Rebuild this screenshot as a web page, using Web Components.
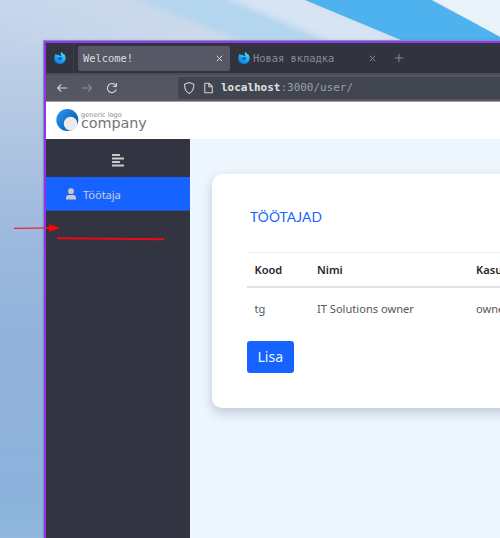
<!DOCTYPE html>
<html lang="et">
<head>
<meta charset="utf-8">
<title>Welcome!</title>
<style>
html,body{margin:0;height:100%;overflow:hidden}
body{font-family:"Noto Sans","Open Sans",sans-serif}
</style>
</head>
<body>
<desk-top>
  <browser-window>
    <tab-bar slot="tabs">
      <browser-tab active>Welcome!</browser-tab>
      <browser-tab>Новая вкладка</browser-tab>
    </tab-bar>
    <nav-bar slot="nav"><b slot="host">localhost</b>:3000/user/</nav-bar>
    <brand-header slot="page"></brand-header>
    <page-body slot="page">
      <side-bar slot="side"><side-item>Töötaja</side-item></side-bar>
      <content-card>
        <card-title>TÖÖTAJAD</card-title>
        <user-table></user-table>
        <action-button>Lisa</action-button>
      </content-card>
    </page-body>
  </browser-window>
  <red-marks slot="overlay"></red-marks>
</desk-top>
<script>
const define = (name, html) => customElements.define(name, class extends HTMLElement {
  constructor(){ super(); this.attachShadow({mode:'open'}).innerHTML = html; }
});

define('desk-top', `<style>
:host{display:block;position:relative;box-sizing:border-box;width:500px;height:538px;padding:41px 0 0 44px;overflow:hidden}
.wall{position:absolute;left:0;top:0}
.main{position:relative;height:100%}
</style>
<svg class="wall" width="500" height="538">
<defs>
<linearGradient id="a" x1="0" y1="0" x2="0" y2="1"><stop offset="0" stop-color="#c9d7ed"/><stop offset=".25" stop-color="#b0c6e2"/><stop offset=".42" stop-color="#9fb9df"/><stop offset=".62" stop-color="#91b3da"/><stop offset=".84" stop-color="#8fb2dc"/><stop offset=".93" stop-color="#8bb3db"/><stop offset="1" stop-color="#91b8dc"/></linearGradient>
<linearGradient id="b" x1="0" y1="0" x2="1" y2="0"><stop offset="0" stop-color="#cbd9ea" stop-opacity="0"/><stop offset=".35" stop-color="#cbdaea"/><stop offset="1" stop-color="#cddceb"/></linearGradient>
<filter id="s" x="-10%" y="-30%" width="120%" height="160%"><feGaussianBlur stdDeviation="3"/></filter>
<filter id="t"><feGaussianBlur stdDeviation=".6"/></filter>
</defs>
<rect width="500" height="538" fill="url(#a)"/>
<rect width="500" height="44" fill="url(#b)"/>
<path d="M125-5H225L355 50H265Z" fill="#b3d5ee" filter="url(#s)"/>
<path d="M220-5H300L420 50H350Z" fill="#d6e4f3" filter="url(#s)"/>
<path d="M293-5H422L510 42V50H425Z" fill="#4db2ed" filter="url(#t)"/>
<path d="M424-5H510V42Z" fill="#e9f1f9" filter="url(#t)"/>
</svg>
<div class="main"><slot></slot></div><slot name="overlay"></slot>`);

define('browser-window', `<style>
:host{display:flex;flex-direction:column;box-sizing:border-box;height:100%;border-left:2px solid #9530f0;border-top:2px solid #9736f4;box-shadow:0 0 0 1px #7d96b4,0 0 3px rgba(50,70,120,.3)}
</style><slot name="tabs"></slot><slot name="nav"></slot><slot name="page"></slot>`);

const fox = `<svg class="fox" width="12" height="12" viewBox="0 0 12 12"><defs><linearGradient id="f" x1=".8" y1="0" x2=".3" y2="1"><stop offset="0" stop-color="#60e7fa"/><stop offset=".45" stop-color="#20b3f5"/><stop offset="1" stop-color="#0878e8"/></linearGradient></defs><path d="M1.7 1.7 3.2 3 4.7 2.7 6.1 4 7.4 3.2 6.5 1.5 7.5.1C8 1.2 9 1.4 9.5 2.4L10 2c1.5 2 2.1 4.3 1.2 6.2C10.200 10.700 8.300 12 6 12 3 12 .3 10 .3 6.600.3 4.700.7 3.200 1.700 1.700Z" fill="url(#f)"/><path d="M4 5.300 5.500 4.800 6.200 5.200 7.200 4.800C8 5.600 7.900 7 6.800 7.600 5.400 8.200 4 7.300 4 5.300Z" fill="#143eab"/><path d="M3.700 4.800 5.700 4.500 6.400 5.200 5.100 6Z" fill="#45cdf7"/></svg>`;

define('tab-bar', `<style>
:host{display:flex;flex:none;height:30px;background:#31343f;align-items:center;box-sizing:border-box;color:#888a94}
.pin{width:27px;height:30px;border-right:1px solid #3e414d;display:flex;align-items:center;justify-content:center;margin-right:4px;flex:none}
.plus{margin-left:12px}
</style><span class="pin">${fox}</span><slot></slot>
<svg class="plus" width="10" height="10" viewBox="0 0 10 10"><path d="M5 .8V9.200M.8 5H9.200" stroke="#858892" stroke-width="1"/></svg>`);

define('browser-tab', `<style>
:host{display:flex;align-items:center;box-sizing:border-box;height:25px;width:152px;padding:0 7px 0 8px;border-radius:2px;font:10.400px/25px "DejaVu Sans Mono",monospace;color:#888b95;white-space:nowrap;flex:none}
:host([active]){background:#565865;color:#dcdde3;padding-left:5px}
:host([active]) .fox{display:none}
.fox{margin-right:3px;flex:none}
.x{margin-left:auto}
:host(:not([active])) .x{margin-right:-1px}
</style>${fox}<span><slot></slot></span><svg class="x" width="7" height="7" viewBox="0 0 7 7"><path d="M.8.8 6.200 6.200M6.200.8.8 6.200" stroke="currentColor" stroke-width="1"/></svg>`);

define('nav-bar', `<style>
:host{display:flex;flex:none;height:29px;box-sizing:border-box;background:#545662;border-top:2px solid #4b4c59;border-bottom:1px solid #a0a1a9;align-items:center;padding-left:10px}
.ico{display:block;flex:none}
.url{display:flex;align-items:center;flex:1;height:22px;margin-left:60px;background:#414550;border-radius:2px 0 0 2px;padding-left:5px;font:10.970px/22px "DejaVu Sans Mono",monospace;color:#9c9fa8;white-space:pre}
::slotted(b){color:#e0e1e6}
</style>
<svg class="ico" width="62" height="14" viewBox="0 0 62 14" fill="none" stroke="#d5d6dc" stroke-width="1.150"><path d="M11.300 7H1.800M5.200 3.400 1.600 7 5.200 10.600"/><path d="M26 7H35.600M32 3.400 35.600 7 32 10.600" stroke="#898b95"/><path d="M59.800 4.800A4.500 4.500 0 1 0 60.200 8.400M60.400 2V5.500H56.900"/></svg>
<div class="url"><svg width="38" height="14" viewBox="0 0 38 14" fill="none" stroke="#cdced5" stroke-width="1.100" stroke-linejoin="round"><path d="M6.200 1.500 10.900 3.300C10.900 7.500 10 10.700 6.200 12.500 2.400 10.700 1.500 7.500 1.500 3.300Z"/><path d="M21.800 2.200H26L29.300 5.500V11.700H21.800ZM25.800 2.200V5.700H29.300"/></svg><slot name="host"></slot><slot></slot></div>`);

define('brand-header', `<style>
:host{display:flex;flex:none;height:36.500px;background:#fff;padding-left:10px;align-items:center;font-family:"DejaVu Sans",sans-serif;color:#777}
.name{display:flex;flex-direction:column;margin-left:2px;white-space:nowrap}
small{font-size:6.600px;line-height:6px;color:#888}
span{font-size:14.400px;line-height:11px;color:#747474;letter-spacing:-.1px}
</style><svg width="23" height="23" viewBox="0 0 23 23"><defs><linearGradient id="l" x1="0" y1="0" x2="1" y2=".8"><stop stop-color="#2c9cf5"/><stop offset="1" stop-color="#0754ac"/></linearGradient></defs><circle cx="11.300" cy="11" r="11" fill="url(#l)"/><circle cx="14.600" cy="14.600" r="6.800" fill="#ececee"/></svg><div class="name"><small>generic logo</small><span>company</span></div>`);

define('page-body', `<style>
:host{display:flex;flex:1;min-height:0;background:#eef6fe}
.content{flex:1;padding:35.500px 0 0 22px;min-width:0}
</style><slot name="side"></slot><div class="content"><slot></slot></div>`);

define('side-bar', `<style>
:host{display:block;flex:none;width:144px;background:#323541}
.top{height:38.800px;display:flex;align-items:center;justify-content:center;padding-top:5px;box-sizing:border-box}
</style><div class="top"><svg width="12" height="13" viewBox="0 0 12 13" fill="#cccccd"><rect y="0" width="8" height="2" rx=".5"/><rect y="3.600" width="12" height="2" rx=".5"/><rect y="7.100" width="8" height="2" rx=".5"/><rect y="10.600" width="12" height="2" rx=".5"/></svg></div><slot></slot>`);

define('side-item', `<style>
:host{display:flex;align-items:center;box-sizing:border-box;height:33.500px;background:#1763ff;border-bottom:1px solid #2754b7;padding:1px 0 0 20px;color:#c9cfe6;font-size:11.200px;letter-spacing:-.1px}
svg{margin-right:7px;flex:none}
</style><svg width="10" height="12" viewBox="0 0 10 12" fill="#c9c9cb"><circle cx="5" cy="3.200" r="2.900"/><path d="M0 11.500V10Q0 7 3 7H7Q10 7 10 10V11.500Z"/></svg><slot></slot>`);

define('content-card', `<style>
:host{display:block;box-sizing:border-box;width:340px;height:234px;background:#fff;border-radius:10px;padding:32px 0 0 34.500px;box-shadow:0 5px 12px rgba(70,90,115,.28)}
</style><slot></slot>`);

define('card-title', `<style>
:host{display:block;height:46px;padding-left:3.500px;font:13.700px/22px Lato,sans-serif;letter-spacing:.15px;color:#1763ff}
</style><slot></slot>`);

define('user-table', `<style>
:host{display:block;font-size:11.100px;color:#55585b}
.row{display:grid;grid-template-columns:62.500px 159px 1fr;padding-left:8px;white-space:nowrap;box-sizing:border-box}
.head{height:36px;border-top:1px solid #eceff1;border-bottom:2px solid #dee3e8;font-weight:600;color:#25282b;line-height:33px}
.data{height:53px;line-height:42px}
</style><div class="row head"><span>Kood</span><span>Nimi</span><span>Kasutaja</span></div><div class="row data"><span>tg</span><span>IT Solutions owner</span><span>owner</span></div>`);

define('action-button', `<style>
:host{display:flex;align-items:center;justify-content:center;width:47.500px;height:32.500px;background:#1763ff;border-radius:3px;color:#f1f5ff;font-size:14px;margin-top:-.3px}
</style><slot></slot>`);

define('red-marks', `<style>
:host{position:absolute;left:0;top:215px;width:180px;height:35px}
svg{display:block}
</style><svg width="180" height="35"><path d="M14 13.400 50 12.800" stroke="#f02432" stroke-width="1.300"/><path d="M49 9.200 60.500 13 49 17Z" fill="#f00"/><path d="M57 23.300 164 24.200" stroke="#ec0a16" stroke-width="2"/></svg>`);
</script>
</body>
</html>
